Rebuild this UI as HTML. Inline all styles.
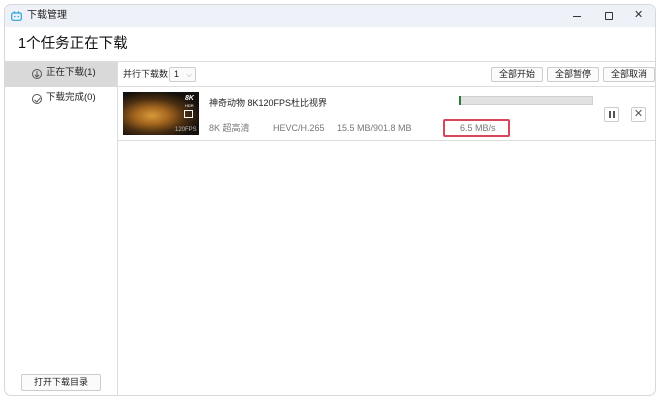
<!DOCTYPE html>
<html><head><meta charset="utf-8"><style>
*{box-sizing:border-box;margin:0;padding:0}
body{width:660px;height:402px;background:#fff;font-family:"Liberation Sans","Noto Sans CJK SC",sans-serif;position:relative;overflow:hidden;color:#222;line-height:1.15}
.win{position:absolute;left:4px;top:4px;width:652px;height:392px;border:1px solid #d8d8d8;border-radius:7px;background:#fff;overflow:hidden}
.title{position:absolute;left:0;top:0;width:100%;height:22px;background:#eef1f7}
.title .t{position:absolute;left:22px;top:5px;font-size:10px;color:#222}
.hdr{position:absolute;left:13px;top:31px;font-size:14.5px;color:#111}
.side{position:absolute;left:0;top:56px;width:113px;bottom:0;border-right:1px solid #ddd;border-top:1px solid #ddd}
.sel{position:absolute;left:0;top:0;width:112px;height:25px;background:#d9d9d9}
.si{position:absolute;left:26px;font-size:9.5px;color:#222}
.ci{position:absolute;left:27px;width:10px;height:10px;border:1px solid #555;border-radius:50%}
.main{position:absolute;left:113px;top:56px;right:0;bottom:0;border-top:1px solid #ddd}
.tb{position:absolute;left:0;top:0;right:0;height:25px;border-bottom:1px solid #ddd}
.btn{position:absolute;height:15px;border:1px solid #ccc;border-radius:2px;background:#fbfbfb;font-size:9px;text-align:center;line-height:13px;color:#222}
.row{position:absolute;left:0;top:26px;right:0;height:53px;border-bottom:1px solid #ddd}
.g{color:#777;font-size:9px;position:absolute}
</style></head><body>
<div class="win">
 <div class="title">
  <svg style="position:absolute;left:6px;top:6px" width="11" height="10" viewBox="0 0 11 10"><rect x="0.7" y="2" width="9.6" height="7.3" rx="1.5" fill="none" stroke="#2aa3d8" stroke-width="1.2"/><path d="M3 0.3L4.3 2M8 0.3L6.7 2" stroke="#2aa3d8" stroke-width="1"/><circle cx="3.8" cy="5.5" r="0.8" fill="#2aa3d8"/><circle cx="7.2" cy="5.5" r="0.8" fill="#2aa3d8"/></svg>
  <div class="t">下载管理</div>
  <div style="position:absolute;left:568px;top:11px;width:8px;height:1px;background:#333"></div>
  <div style="position:absolute;left:600px;top:7px;width:8px;height:8px;border:1px solid #333;border-radius:1px"></div>
  <div style="position:absolute;left:629px;top:4px;font-size:11px;color:#333">✕</div>
 </div>
 <div class="hdr">1个任务正在下载</div>
 <div class="side">
  <div class="sel"></div>
  <div class="ci" style="top:7px"></div><svg style="position:absolute;left:29px;top:9px" width="6" height="7"><path d="M3 0V6M0.8 3.8L3 6L5.2 3.8" stroke="#555" fill="none"/></svg>
  <div class="si" style="left:41px;top:6px">正在下载(1)</div>
  <div class="ci" style="top:32px"></div><svg style="position:absolute;left:29px;top:35px" width="7" height="6"><path d="M0.5 3L2.8 5L6.5 0.8" stroke="#555" fill="none"/></svg>
  <div class="si" style="left:41px;top:31px">下载完成(0)</div>
  <div class="btn" style="left:16px;top:312px;width:80px;height:17px;line-height:15px">打开下载目录</div>
 </div>
 <div class="main">
  <div class="tb">
   <div style="position:absolute;left:5px;top:7px;font-size:9px">并行下载数</div>
   <div class="btn" style="left:51px;top:5px;width:27px;text-align:left;padding-left:4px">1 <span style="color:#888;font-size:7px;margin-left:5px">⌵</span></div>
   <div class="btn" style="left:373px;top:5px;width:52px">全部开始</div>
   <div class="btn" style="left:429px;top:5px;width:52px">全部暂停</div>
   <div class="btn" style="left:485px;top:5px;width:52px">全部取消</div>
  </div>
  <div class="row">
   <div style="position:absolute;left:5px;top:4px;width:76px;height:43px;background:radial-gradient(ellipse at 38% 55%,#d89a3a 0,#a4661e 25%,#4a2e12 50%,#14100c 75%),#111"></div>
   <div style="position:absolute;left:67px;top:7px;color:#fff;font-size:7px;font-weight:bold;font-style:italic">8K</div>
   <div style="position:absolute;left:67px;top:16px;color:#fff;font-size:4px">HDR</div>
   <div style="position:absolute;left:66px;top:22px;width:9px;height:8px;border:1px solid #fff"></div>
   <div style="position:absolute;left:57px;top:39px;color:#bbb;font-size:6px">120FPS</div>
   <div style="position:absolute;left:91px;top:10px;font-size:9px">神奇动物 8K120FPS杜比视界</div>
   <div class="g" style="left:91px;top:35px">8K 超高清</div>
   <div class="g" style="left:155px;top:35px">HEVC/H.265</div>
   <div class="g" style="left:219px;top:35px">15.5 MB/901.8 MB</div>
   <div style="position:absolute;left:325px;top:31px;width:67px;height:18px;border:2px solid #d9455b;border-radius:2px"></div>
   <div class="g" style="left:342px;top:35px">6.5 MB/s</div>
   <div style="position:absolute;left:341px;top:8px;width:134px;height:9px;background:#e2e2e2;border:1px solid #d0d0d0"></div>
   <div style="position:absolute;left:341px;top:8px;width:2px;height:9px;background:#2f7a3e"></div>
   <div style="position:absolute;left:486px;top:19px;width:15px;height:15px;border:1px solid #ccc;border-radius:2px"></div>
   <div style="position:absolute;left:491px;top:23px;width:2px;height:7px;border:1px solid #555"></div>
   <div style="position:absolute;left:495px;top:23px;width:2px;height:7px;border:1px solid #555"></div>
   <div style="position:absolute;left:513px;top:19px;width:15px;height:15px;border:1px solid #ccc;border-radius:2px;text-align:center;font-size:11px;line-height:13px;color:#555">✕</div>
  </div>
 </div>
</div>
</body></html>
